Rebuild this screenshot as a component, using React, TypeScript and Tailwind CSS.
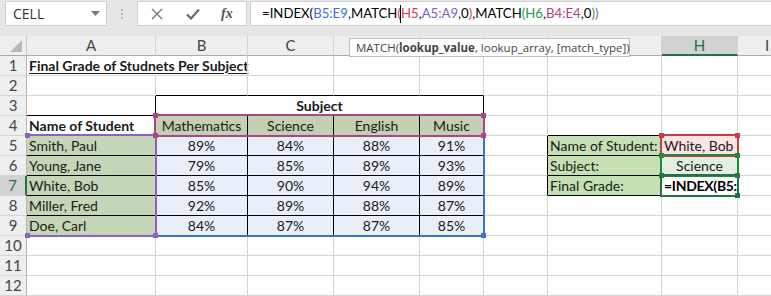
import React from "react";

type CP = {
  w: string;
  rb?: boolean;
  bb?: boolean;
  cls?: string;
  children?: React.ReactNode;
};

function Cell({ w, rb, bb, cls = "", children }: CP) {
  const r = rb ? "border-r-black" : "border-r-[#d4d4d4]";
  const b = bb ? "border-b-black" : "border-b-[#d4d4d4]";
  return (
    <div
      className={`${w} shrink-0 h-full border-r border-b ${r} ${b} flex items-center whitespace-nowrap px-[2px] ${cls}`}
    >
      {children}
    </div>
  );
}

function RowHdr({ n, sel }: { n: number; sel?: boolean }) {
  return (
    <div
      className={
        sel
          ? "w-[27px] shrink-0 h-full border-b border-b-[#d4d4d4] border-r-2 border-r-[#217346] bg-[#d2d2d2] text-[#217346] flex items-center justify-center text-[15px]"
          : "w-[27px] shrink-0 h-full border-b border-b-[#d4d4d4] border-r border-r-[#b6b6b6] bg-[#efefef] text-[#444] flex items-center justify-center text-[15px]"
      }
    >
      {n}
    </div>
  );
}

function Empty({ n }: { n: number }) {
  return (
    <div className="flex h-[20px]">
      <RowHdr n={n} />
      <Cell w="w-[129px]" />
      <Cell w="w-[92px]" />
      <Cell w="w-[86px]" />
      <Cell w="w-[86px]" />
      <Cell w="w-[64px]" />
      <Cell w="w-[64px]" />
      <Cell w="w-[114px]" />
      <Cell w="w-[76px]" />
      <div className="flex-1 h-full border-b border-b-[#d4d4d4]" />
    </div>
  );
}

const data: [string, string, string, string, string][] = [
  ["Smith, Paul", "89%", "84%", "88%", "91%"],
  ["Young, Jane", "79%", "85%", "89%", "93%"],
  ["White, Bob", "85%", "90%", "94%", "89%"],
  ["Miller, Fred", "92%", "89%", "88%", "87%"],
  ["Doe, Carl", "84%", "87%", "87%", "85%"],
];

function Handle({ x, y, c }: { x: number; y: number; c: string }) {
  return <div className={`absolute w-[5px] h-[5px] ${c}`} style={{ left: x - 2, top: y - 2 }} />;
}

export default function App() {
  const numCls = "bg-[#e9eff8] justify-center";
  return (
    <div className="relative w-[771px] h-[296px] overflow-hidden bg-white text-[14px] text-[#1a1a1a] font-[family-name:Lato,'Liberation_Sans',sans-serif]">
      {/* Formula bar */}
      <div className="h-[36px] bg-[#e6e6e6] pt-[1px]">
        <div className="flex h-[25px]">
          <div className="ml-[5px] w-[102px] h-[25px] bg-white border border-[#d0d0d0] flex items-center justify-between pl-[7px] pr-[6px]">
            <span className="text-[14px] text-[#333] font-[family-name:'Open_Sans',sans-serif]">CELL</span>
            <svg width="9" height="5" viewBox="0 0 9 5">
              <path d="M0 0 L9 0 L4.5 5 Z" fill="#7a7a7a" />
            </svg>
          </div>
          <div className="w-[30px] flex flex-col items-center justify-center gap-[2px]">
            <div className="w-[2px] h-[2px] bg-[#b4b4b4]" />
            <div className="w-[2px] h-[2px] bg-[#b4b4b4]" />
            <div className="w-[2px] h-[2px] bg-[#b4b4b4]" />
          </div>
          <div className="w-[110px] h-[25px] bg-white border border-[#d0d0d0] flex items-center">
            <svg className="ml-[13px]" width="12" height="12" viewBox="0 0 12 12">
              <path d="M1 1 L11 11 M11 1 L1 11" stroke="#7a7a7a" strokeWidth="1.4" fill="none" />
            </svg>
            <svg className="ml-[23px]" width="14" height="12" viewBox="0 0 14 12">
              <path d="M1 6.5 L5 10.5 L13 1.5" stroke="#6a6a6a" strokeWidth="2.2" fill="none" />
            </svg>
            <span className="ml-[21px] italic font-bold text-[14px] text-[#555] font-[family-name:'Liberation_Serif',serif]">
              fx
            </span>
          </div>
          <div className="ml-[3px] flex-1 h-[25px] bg-white border-y border-l border-[#d0d0d0] flex items-center pl-[11px] text-[13.2px] text-black whitespace-nowrap">
            <span>=INDEX(</span>
            <span className="text-[#3a6fd0]">B5:E9</span>
            <span>,MATCH</span>
            <span className="text-[#d0404a]">(</span>
            <span className="inline-block w-[1px] h-[18px] bg-black -ml-[1px]" />
            <span className="text-[#d0404a]">H5</span>
            <span>,</span>
            <span className="text-[#8a5cc4]">A5:A9</span>
            <span>,0</span>
            <span className="text-[#d0404a]">)</span>
            <span>,MATCH</span>
            <span className="text-[#1f9a46]">(</span>
            <span className="text-[#1f9a46]">H6</span>
            <span>,</span>
            <span className="text-[#b0428a]">B4:E4</span>
            <span>,0</span>
            <span className="text-[#1f9a46]">)</span>
            <span className="text-[#8a5cc4]">)</span>
          </div>
        </div>
      </div>

      {/* Column headers */}
      <div className="flex h-[20px] text-[#444] text-[15px]">
        <div className="w-[27px] shrink-0 h-full bg-[#efefef] border-r border-b border-r-[#c8c8c8] border-b-[#ababab] flex items-end justify-end pr-[4px] pb-[3px]">
          <svg width="12" height="12" viewBox="0 0 12 12">
            <path d="M12 0 L12 12 L0 12 Z" fill="#b9b9b9" />
          </svg>
        </div>
        {[
          ["w-[129px]", "A"],
          ["w-[92px]", "B"],
          ["w-[86px]", "C"],
          ["w-[86px]", ""],
          ["w-[64px]", ""],
          ["w-[64px]", ""],
          ["w-[114px]", ""],
        ].map(([w, l], k) => (
          <div
            key={k}
            className={`${w} shrink-0 h-full bg-[#efefef] border-r border-b border-r-[#d4d4d4] border-b-[#ababab] flex items-center justify-center`}
          >
            {l}
          </div>
        ))}
        <div className="w-[76px] shrink-0 h-full bg-[#d2d2d2] border-r border-r-[#d4d4d4] border-b-2 border-b-[#217346] text-[#217346] flex items-center justify-center pt-[1px]">
          H
        </div>
        <div className="w-[58px] shrink-0 h-full bg-[#efefef] border-b border-b-[#ababab] flex items-center justify-center">
          I
        </div>
      </div>

      {/* Row 1 */}
      <div className="flex h-[20px]">
        <RowHdr n={1} />
        <Cell w="w-[129px]" cls="border-r-transparent overflow-visible font-bold underline underline-offset-2">
          <span>Final Grade of Studnets Per Subject</span>
        </Cell>
        <Cell w="w-[92px]" />
        <Cell w="w-[86px]" />
        <Cell w="w-[86px]" />
        <Cell w="w-[64px]" />
        <Cell w="w-[64px]" />
        <Cell w="w-[114px]" />
        <Cell w="w-[76px]" />
        <div className="flex-1 h-full border-b border-b-[#d4d4d4]" />
      </div>

      {/* Row 2 */}
      <div className="flex h-[20px]">
        <RowHdr n={2} />
        <Cell w="w-[129px]" />
        <Cell w="w-[92px]" bb />
        <Cell w="w-[86px]" bb />
        <Cell w="w-[86px]" bb />
        <Cell w="w-[64px]" bb />
        <Cell w="w-[64px]" />
        <Cell w="w-[114px]" />
        <Cell w="w-[76px]" />
        <div className="flex-1 h-full border-b border-b-[#d4d4d4]" />
      </div>

      {/* Row 3 */}
      <div className="flex h-[20px]">
        <RowHdr n={3} />
        <Cell w="w-[129px]" rb bb />
        <Cell w="w-[328px]" rb bb cls="justify-center font-bold">
          Subject
        </Cell>
        <Cell w="w-[64px]" />
        <Cell w="w-[114px]" />
        <Cell w="w-[76px]" />
        <div className="flex-1 h-full border-b border-b-[#d4d4d4]" />
      </div>

      {/* Row 4 */}
      <div className="flex h-[20px]">
        <RowHdr n={4} />
        <Cell w="w-[129px]" rb bb cls="font-bold">
          Name of Student
        </Cell>
        <Cell w="w-[92px]" rb bb cls="bg-[#c4d0b2] justify-center">
          Mathematics
        </Cell>
        <Cell w="w-[86px]" rb bb cls="bg-[#c4d0b2] justify-center">
          Science
        </Cell>
        <Cell w="w-[86px]" rb bb cls="bg-[#c4d0b2] justify-center">
          English
        </Cell>
        <Cell w="w-[64px]" rb bb cls="bg-[#c4d0b2] justify-center">
          Music
        </Cell>
        <Cell w="w-[64px]" />
        <Cell w="w-[114px]" bb />
        <Cell w="w-[76px]" bb />
        <div className="flex-1 h-full border-b border-b-[#d4d4d4]" />
      </div>

      {/* Rows 5-9 */}
      {data.map((r, i) => (
        <div key={i} className="flex h-[20px]">
          <RowHdr n={i + 5} sel={i === 2} />
          <Cell w="w-[129px]" rb bb cls="bg-[#c4d6b6]">
            {r[0]}
          </Cell>
          <Cell w="w-[92px]" rb bb cls={numCls}>
            {r[1]}
          </Cell>
          <Cell w="w-[86px]" rb bb cls={numCls}>
            {r[2]}
          </Cell>
          <Cell w="w-[86px]" rb bb cls={numCls}>
            {r[3]}
          </Cell>
          <Cell w="w-[64px]" rb bb cls={numCls}>
            {r[4]}
          </Cell>
          {i === 0 && (
            <>
              <Cell w="w-[64px]" rb />
              <Cell w="w-[114px]" rb bb cls="bg-[#c6e0b4]">
                Name of Student:
              </Cell>
              <Cell w="w-[76px]" rb bb cls="bg-[#fce4e4] overflow-hidden">
                White, Bob
              </Cell>
            </>
          )}
          {i === 1 && (
            <>
              <Cell w="w-[64px]" rb />
              <Cell w="w-[114px]" rb bb cls="bg-[#c6e0b4]">
                Subject:
              </Cell>
              <Cell w="w-[76px]" rb bb cls="bg-[#e3efe3] justify-center">
                Science
              </Cell>
            </>
          )}
          {i === 2 && (
            <>
              <Cell w="w-[64px]" rb />
              <Cell w="w-[114px]" rb bb cls="bg-[#c6e0b4]">
                Final Grade:
              </Cell>
              <Cell w="w-[76px]" rb bb cls="bg-white overflow-hidden font-bold text-black tracking-[-0.3px]">
                =INDEX(B5:E9
              </Cell>
            </>
          )}
          {i > 2 && (
            <>
              <Cell w="w-[64px]" />
              <Cell w="w-[114px]" />
              <Cell w="w-[76px]" />
            </>
          )}
          <div className="flex-1 h-full border-b border-b-[#d4d4d4]" />
        </div>
      ))}

      <Empty n={10} />
      <Empty n={11} />
      <Empty n={12} />

      {/* Reference highlights */}
      <div className="absolute left-[154px] top-[134px] w-[331px] h-[103px] border-r-2 border-b-2 border-[#3b74cc]" />
      <Handle x={483} y={235} c="bg-[#3b74cc]" />
      <div className="absolute left-[26px] top-[134px] w-[131px] h-[103px] border-t-2 border-r-2 border-b-2 border-[#8b61c3]" />
      <Handle x={27} y={135} c="bg-[#8b61c3]" />
      <Handle x={27} y={235} c="bg-[#8b61c3]" />
      <Handle x={155} y={235} c="bg-[#8b61c3]" />
      <div className="absolute left-[154px] top-[114px] w-[331px] h-[23px] border-2 border-[#ab4683]" />
      <Handle x={155} y={115} c="bg-[#ab4683]" />
      <Handle x={483} y={115} c="bg-[#ab4683]" />
      <Handle x={155} y={135} c="bg-[#ab4683]" />
      <Handle x={483} y={135} c="bg-[#ab4683]" />

      <div className="absolute left-[660px] top-[134px] w-[79px] h-[23px] border-2 border-[#c83c44]" />
      <Handle x={661} y={135} c="bg-[#c83c44]" />
      <Handle x={737} y={135} c="bg-[#c83c44]" />
      <div className="absolute left-[660px] top-[154px] w-[79px] h-[23px] border-2 border-[#1f8a3a]" />
      <Handle x={661} y={155} c="bg-[#1f8a3a]" />
      <Handle x={737} y={155} c="bg-[#1f8a3a]" />
      <Handle x={661} y={175} c="bg-[#1f8a3a]" />
      <Handle x={737} y={175} c="bg-[#1f8a3a]" />
      <div className="absolute left-[660px] top-[174px] w-[79px] h-[23px] border-2 border-[#217346]" />
      <Handle x={737} y={195} c="bg-[#217346]" />

      {/* Tooltip */}
      <div className="absolute left-[349px] top-[38px] w-[281px] h-[19px] bg-white border border-[#bdbdbd] flex items-center pl-[6px] text-[11.5px] text-[#444] whitespace-nowrap font-[family-name:'Open_Sans',sans-serif]">
        MATCH(<b className="font-bold">lookup_value</b>, lookup_array, [match_type])
      </div>
    </div>
  );
}
